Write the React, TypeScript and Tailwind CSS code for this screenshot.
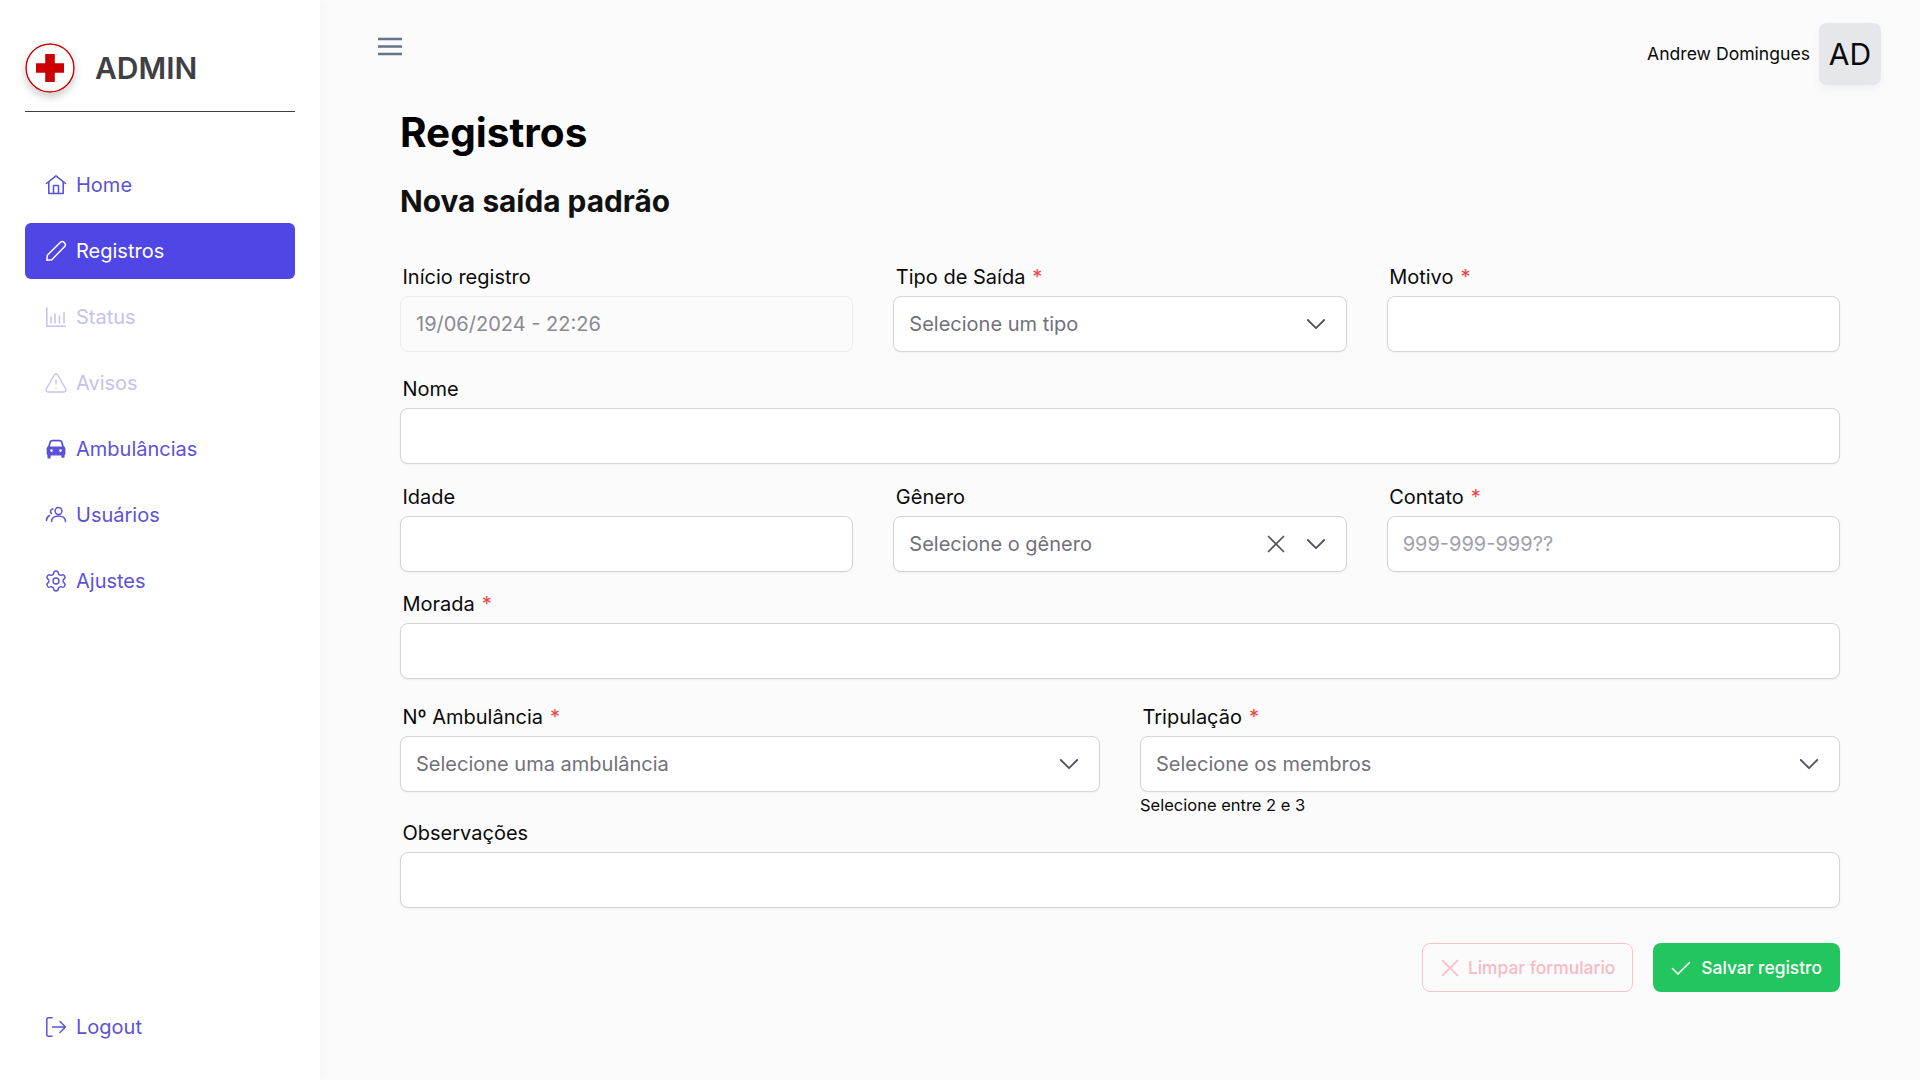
import { Settings, TriangleAlert } from "lucide-react";
import type { ReactNode } from "react";

const HomeIcon = () => (
  <svg viewBox="0 0 20 20" className="w-5 h-5 overflow-visible" fill="none" stroke="currentColor" strokeWidth="1.600" strokeLinejoin="round" strokeLinecap="round">
    <path d="M.5 8.500 10 .8l9.500 7.700" />
    <path d="M2.800 7v11.500h14.400V7" />
    <path d="M7.500 18.500V10.500h5v8" />
  </svg>
);

const PencilIcon = () => (
  <svg viewBox="0 0 20 20" className="w-5 h-5 overflow-visible" fill="none" stroke="currentColor" strokeWidth="1.5" strokeLinejoin="round" strokeLinecap="round">
    <path d="M.8 19.200l.5-5L14.500 1.300a2.400 2.400 0 0 1 3.400 0l.8.8a2.400 2.400 0 0 1 0 3.400L5.800 18.700l-5 .5Z" />
  </svg>
);

const ChartIcon = () => (
  <svg viewBox="0 0 20 20" className="w-5 h-5 overflow-visible" fill="none" stroke="currentColor" strokeWidth="1.500" strokeLinecap="round">
    <path d="M.8.800v18.400h18.400" />
    <path d="M5 10v6M9 7v9M13.500 9v7M18 5.500V16" />
  </svg>
);

const CarIcon = () => (
  <svg viewBox="0 0 20 20" className="w-5 h-5 overflow-visible" fill="currentColor" fillRule="evenodd">
    <path d="M6.200 .8h7.600c1.300 0 2.400.8 2.800 2l1.300 4.500c.9.500 1.500 1.400 1.500 2.500v4.700c0 .7-.3 1.200-.8 1.500v1.700c0 .6-.4 1-1 1h-1.300c-.6 0-1-.4-1-1V16.500H4.700V18.500c0 .6-.4 1-1 1H2.400c-.6 0-1-.4-1-1V16c-.5-.3-.8-.8-.8-1.500V9.800c0-1.100.6-2 1.500-2.500L3.400 2.800c.4-1.200 1.500-2 2.800-2Zm0 1.600c-.5 0-.9.3-1.100.8L3.900 7.500h12.200l-1.200-4.300c-.2-.5-.6-.8-1.100-.8H6.200ZM5.500 10.300a1.300 1.300 0 1 0 0 2.600 1.300 1.300 0 0 0 0-2.600Zm9 0a1.300 1.300 0 1 0 0 2.600 1.300 1.300 0 0 0 0-2.600Z" />
  </svg>
);

const UsersIcon = () => (
  <svg viewBox="0 0 20 20" className="w-5 h-5 overflow-visible" fill="none" stroke="currentColor" strokeWidth="1.500" strokeLinecap="round">
    <circle cx="12.500" cy="6" r="3.400" />
    <path d="M5.500 16.500c0-3.500 3-5.500 7-5.500s7 2 7 5.500" />
    <path d="M7 4a2.500 2.500 0 0 0-1.500 4.500M.5 15.500c0-2.500 1-4 3-5" />
  </svg>
);

const LogoutIcon = () => (
  <svg viewBox="0 0 20 20" className="w-5 h-5 overflow-visible" fill="none" stroke="currentColor" strokeWidth="1.500" strokeLinecap="round" strokeLinejoin="round">
    <path d="M6 .8H2.300A1.500 1.500 0 0 0 .8 2.300v15.400a1.500 1.500 0 0 0 1.500 1.500H6" />
    <path d="M6.500 10h13M14 4.500l5.500 5.500-5.500 5.500" />
  </svg>
);

const ChevronIcon = () => (
  <svg viewBox="0 0 20 20" className="w-5 h-5 mr-[5px] text-[#52525b]" fill="none" stroke="currentColor" strokeWidth="1.800" strokeLinecap="round" strokeLinejoin="round">
    <path d="M1.800 6 10 14.200 18.200 6" />
  </svg>
);

const CrossIcon = ({ className }: { className: string }) => (
  <svg viewBox="0 0 20 20" className={className} fill="none" stroke="currentColor" strokeWidth="1.700" strokeLinecap="round">
    <path d="M2.500 2.500l15 15M17.500 2.500l-15 15" />
  </svg>
);

const Logo = () => (
  <svg viewBox="0 0 50 50" className="w-[50px] h-[50px] shrink-0 rounded-full bg-white shadow-[0_4px_8px_rgba(0,0,0,0.2)]">
    <circle cx="25" cy="25" r="24" fill="#fff" stroke="#cc0000" strokeWidth="1.500" />
    <path d="M20.200 11h9.600v9.200h9.200v9.600h-9.200v9.200h-9.600v-9.200h-9.200v-9.600h9.200z" fill="#cc0000" />
  </svg>
);

const NavItem = ({ icon, label, active, faded }: { icon: ReactNode; label: string; active?: boolean; faded?: boolean }) => (
  <div
    className={`flex items-center gap-[10px] h-14 pl-[21px] pr-5 rounded-md text-xl ${
      active ? "bg-[#4f46e5] text-white" : faded ? "text-[#c5c2ee]" : "text-[#5b53d6]"
    }`}
  >
    {icon}
    <span>{label}</span>
  </div>
);

const Field = ({ label, required, className, children }: { label: string; required?: boolean; className?: string; children: ReactNode }) => (
  <div className={className}>
    <label className="block h-[29px] pt-px mb-[5px] pl-[2.500px] text-xl leading-7 text-[#0a0a0a]">
      {label}
      {required && <span className="text-[#ef4444] ml-[7px]">*</span>}
    </label>
    {children}
  </div>
);

const Box = ({ children, muted }: { children?: ReactNode; muted?: boolean }) => (
  <div
    className={`flex items-center h-14 px-[15px] rounded-lg border text-xl ${
      muted ? "bg-[#fbfbfb] border-[#ebebeb]" : "bg-white border-[#d4d4d8] shadow-[0_1px_2px_rgba(0,0,0,0.05)]"
    }`}
  >
    {children}
  </div>
);

const Select = ({ placeholder, clearable }: { placeholder: string; clearable?: boolean }) => (
  <Box>
    <span className="flex-1 text-[#71717a]">{placeholder}</span>
    {clearable && <CrossIcon className="w-5 h-5 mr-5 text-[#52525b]" />}
    <ChevronIcon />
  </Box>
);

export default function App() {
  return (
    <div className="flex h-screen bg-[#fbfbfb] font-['Inter',sans-serif] text-[#0a0a0a] overflow-hidden">
      <aside className="flex flex-col w-[320px] shrink-0 px-[25px] pt-[43px] pb-[25px] bg-white shadow-[0_0_12px_rgba(0,0,0,0.04)]">
        <div className="flex items-center gap-5 pb-[18px] border-b border-[#3f3f46]">
          <Logo />
          <span className="text-[30px] font-semibold text-[#3f3f46]">ADMIN</span>
        </div>
        <nav className="flex flex-col mt-[45px]">
          {[
            { icon: <HomeIcon />, label: "Home" },
            { icon: <PencilIcon />, label: "Registros", active: true },
            { icon: <ChartIcon />, label: "Status", faded: true },
            { icon: <TriangleAlert className="w-6 h-6 -m-[2px]" strokeWidth={1.4} />, label: "Avisos", faded: true },
            { icon: <CarIcon />, label: "Ambulâncias" },
            { icon: <UsersIcon />, label: "Usuários" },
            { icon: <Settings className="w-6 h-6 -m-[2px]" strokeWidth={1.4} />, label: "Ajustes" },
          ].map((item) => (
            <div key={item.label} className="mb-[10px]">
              <NavItem {...item} />
            </div>
          ))}
        </nav>
        <div className="mt-auto">
          <NavItem icon={<LogoutIcon />} label="Logout" />
        </div>
      </aside>

      <main className="flex-1 min-w-0">
        <header className="flex items-start justify-between h-[109px] pt-[23px] pl-[55px] pr-[39px]">
          <svg viewBox="0 0 30 22" className="w-[30px] h-[22px] mt-[12px] text-[#64748b]" fill="none" stroke="currentColor" strokeWidth="2.400">
            <path d="M3 4h24M3 11.500h24M3 19h24" />
          </svg>
          <div className="flex items-center gap-[9px]">
            <span className="text-[17.600px] text-[#0a0a0a]">Andrew Domingues</span>
            <div className="flex items-center justify-center w-[62px] h-[62px] rounded-lg bg-[#e5e7eb] text-[30px] shadow-[0_4px_10px_rgba(0,0,0,0.05)]">
              AD
            </div>
          </div>
        </header>

        <div className="px-[80px]">
          <h1 className="text-[40.500px] leading-[48px] font-bold text-black">Registros</h1>
          <h2 className="mt-[26px] text-[29.800px] leading-9 font-bold text-[#111]">Nova saída padrão</h2>

          <div className="grid grid-cols-3 gap-x-10 mt-[43px]">
            <Field label="Início registro">
              <Box muted>
                <span className="text-[#8a8a90]">19/06/2024 - 22:26</span>
              </Box>
            </Field>
            <Field label="Tipo de Saída" required>
              <Select placeholder="Selecione um tipo" />
            </Field>
            <Field label="Motivo" required>
              <Box />
            </Field>
          </div>

          <Field label="Nome" className="mt-[22px]">
            <Box />
          </Field>

          <div className="grid grid-cols-3 gap-x-10 mt-[18px]">
            <Field label="Idade">
              <Box />
            </Field>
            <Field label="Gênero">
              <Select placeholder="Selecione o gênero" clearable />
            </Field>
            <Field label="Contato" required>
              <Box>
                <span className="text-[#a1a1aa]">999-999-999??</span>
              </Box>
            </Field>
          </div>

          <Field label="Morada" required className="mt-[17px]">
            <Box />
          </Field>

          <div className="grid grid-cols-2 gap-x-10 mt-[23px]">
            <Field label="Nº Ambulância" required>
              <Select placeholder="Selecione uma ambulância" />
            </Field>
            <div>
              <Field label="Tripulação" required>
                <Select placeholder="Selecione os membros" />
              </Field>
              <p className="mt-px text-[16.500px] leading-6 text-[#0a0a0a]">Selecione entre 2 e 3</p>
            </div>
          </div>

          <Field label="Observações" className="mt-px">
            <Box />
          </Field>

          <div className="flex justify-end gap-5 mt-[35px]">
            <button className="flex items-center gap-2 h-[49px] pt-px px-[17px] rounded-lg border border-[#f8c4cc] text-[17.400px] font-medium text-[#f7b9c4]">
              <CrossIcon className="w-5 h-5" />
              Limpar formulario
            </button>
            <button className="flex items-center gap-[10px] h-[49px] pt-px px-[18px] rounded-lg bg-[#22c55e] text-[17.400px] font-medium text-white">
              <svg viewBox="0 0 20 20" className="w-5 h-5" fill="none" stroke="currentColor" strokeWidth="1.600" strokeLinecap="round" strokeLinejoin="round">
                <path d="M1.500 10.500 7 16 18.500 4.500" />
              </svg>
              Salvar registro
            </button>
          </div>
        </div>
      </main>
    </div>
  );
}
